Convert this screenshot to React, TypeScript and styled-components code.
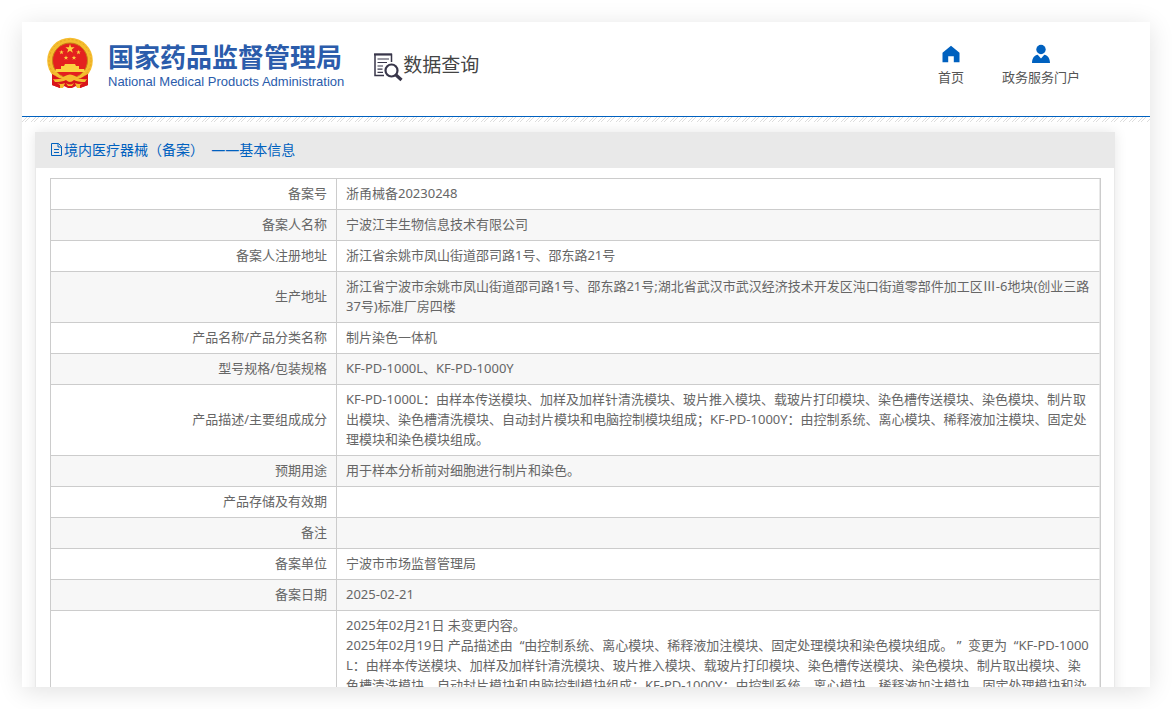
import React from "react";
import styled, { createGlobalStyle } from "styled-components";

const cjk = '"Noto Sans CJK SC", sans-serif';

const GlobalStyle = createGlobalStyle`
  * { box-sizing: border-box; }
  html, body { margin: 0; background: #fff; }
  body {
    font-family: "Noto Sans", ${cjk};
    font-size: 13px;
    line-height: 20px;
    color: #666;
  }
`;

const Page = styled.main`
  margin: 22px;
  height: calc(100vh - 44px);
  overflow: hidden;
  background: #fff;
  box-shadow: 0 4px 24px rgba(0, 0, 0, 0.12);
`;

const Header = styled.header`
  display: flex;
  align-items: flex-start;
  height: 95px;
  padding: 0 70px 0 24px;
  border-bottom: 1px solid #0061bf;
`;

const Brand = styled.a`
  display: flex;
  gap: 14px;
  padding-top: 15px;
  color: #2b5cab;
  text-decoration: none;
`;

const BrandText = styled.span`
  display: flex;
  flex-direction: column;
  padding-top: 2px;
`;

const BrandName = styled.strong`
  font: 700 26px/34px ${cjk};
  white-space: nowrap;
`;

const BrandEnglish = styled.span`
  font: 400 13px/18px "Liberation Sans", sans-serif;
  white-space: nowrap;
`;

const Query = styled.h1`
  display: flex;
  align-items: flex-start;
  margin: 28px 0 0 30px;
  font: 400 19px/28px ${cjk};
  color: #444;
`;

const QueryMark = styled.svg`
  width: 29px;
  height: 29px;
  margin-top: 3px;
`;

const Nav = styled.nav`
  display: flex;
  gap: 38px;
  margin-left: auto;
  padding-top: 22px;
`;

const NavLink = styled.a`
  display: flex;
  flex-direction: column;
  align-items: center;
  gap: 3px;
  color: #555;
  text-decoration: none;
  white-space: nowrap;
`;

const Hatch = styled.svg`
  display: block;
  width: 100%;
  height: 5px;
`;

const Panel = styled.section`
  margin: 10px 35px 0 13px;
  background: #fff;
  border: 1px solid #e9e9e9;
  border-top: 0;
  box-shadow: 0 0 12px rgba(0, 0, 0, 0.1);
`;

const PanelTitle = styled.h2`
  display: flex;
  align-items: center;
  height: 36px;
  margin: 0;
  padding: 0 14px;
  background: #e9e9e9;
  color: #0061bf;
  font-size: 14px;
  font-weight: 400;
`;

const PanelBody = styled.div`
  padding: 10px 13px 20px 14px;
`;

const Table = styled.table`
  width: 100%;
  border-collapse: separate;
  border-spacing: 0;
  border: 1px solid #ccc;
  table-layout: fixed;
`;

const LabelColumn = styled.col`
  width: 286px;
`;

const Row = styled.tr`
  &:nth-child(even) { background: #f7f7f7; }
  & > * { border-bottom: 1px solid #ccc; }
`;

const Label = styled.th`
  padding: 4px 9px 6px;
  border-right: 1px solid #ccc;
  font-weight: 400;
  text-align: right;
`;

const Value = styled.td`
  height: 31px;
  padding: 4px 8px 6px 9px;
  border-right: 1px solid #e9e9e9;
`;

const Record = styled.p`
  margin: 0;
  word-break: break-all;
`;

const Emblem = () => (
  <svg width="48" height="52" viewBox="0 0 48 52" aria-hidden="true">
    <path d="M6 35 L6 48 L14 51 L18 49 L22 51 H26 L30 49 L34 51 L42 48 L42 35 Z" fill="#d9141a" />
    <circle cx="24" cy="23.5" r="22.8" fill="#f5bd2f" />
    <circle cx="24" cy="23.5" r="21" fill="none" stroke="#e8a522" strokeWidth="1" strokeDasharray="2 2" />
    <circle cx="24" cy="23.5" r="17.5" fill="#e4201f" stroke="#c98316" strokeWidth="1" />
    <path d="M24 7 L25.1 10.3 H28.6 L25.8 12.4 L26.9 15.7 L24 13.7 L21.1 15.7 L22.2 12.4 L19.4 10.3 H22.9 Z" fill="#fbd340" />
    <g fill="#fbd340">
      <path id="star" d="M15.5 13 L16.1 14.6 H17.8 L16.4 15.6 L17 17.3 L15.5 16.3 L14 17.3 L14.6 15.6 L13.2 14.6 H14.9 Z" />
      <use href="#star" x="17" />
      <use href="#star" x="4.5" y="5.5" />
      <use href="#star" x="12.5" y="5.5" />
      <path d="M19 27 H29 L30 29 H33 V32 H38 L39 35 H9 L10 32 H15 V29 H18 Z" />
    </g>
    <path d="M6 37 L13 41 H35 L42 37 V48 L34 51 L30 49 H18 L14 51 L6 48 Z" fill="#d9141a" />
    <path d="M7 42 Q14 43 19 39 Q24 36 29 39 Q34 43 41 42 L39 45 Q32 45 28 43 Q24 47 20 43 Q16 45 9 45 Z" fill="#f5bd2f" />
    <path d="M11 46 Q15 48 19 46 L17 51 H14 L14 48 Z M29 46 Q33 48 37 46 L34 48 V51 H31 Z M20 46 Q24 49 28 46 L26 49 H22 Z" fill="#f5bd2f" />
  </svg>
);

const QueryIcon = () => (
  <QueryMark viewBox="0 0 29 29" fill="none" stroke="#38364a" aria-hidden="true">
    <path d="M17.5 9 V1.5 H1 V22.5 H10" strokeWidth="1.5" />
    <path d="M0 1.4 H18" strokeWidth="2" />
    <path d="M3.5 6 H15 M3.5 9.5 H13 M3.5 13 H9 M3.5 16.2 H8.5 M3.5 19.3 H9" strokeWidth="1.2" />
    <circle cx="17.5" cy="17.5" r="6" strokeWidth="2.2" />
    <path d="M22 22 L27.5 27" strokeWidth="3.2" />
  </QueryMark>
);

const HomeIcon = () => (
  <svg width="20" height="20" viewBox="0 0 20 20" fill="#0061bf" aria-hidden="true">
    <path d="M10 1.8 L18.5 8.7 V18.3 H12.8 V12.2 H7.2 V18.3 H1.5 V8.7 Z" />
  </svg>
);

const UserIcon = () => (
  <svg width="20" height="20" viewBox="0 0 20 20" fill="#0061bf" aria-hidden="true">
    <circle cx="10" cy="5.5" r="4.7" />
    <path d="M1 19 C1.2 13.5 3.5 11.5 6.7 10.8 L10 14.4 L13.3 10.8 C16.5 11.5 18.8 13.5 19 19 Z" />
  </svg>
);

const DocumentIcon = () => (
  <svg width="14" height="14" viewBox="0 0 14 14" fill="none" stroke="#0061bf" aria-hidden="true">
    <path d="M1.5 0.5 H8.5 L11.5 3.5 V12.5 H1.5 Z M8 0.5 V4 H11.5 M4 6.5 H9 M4 9.5 H9" />
  </svg>
);

const rows: { label: string; value: string }[] = [
  { label: "备案号", value: "浙甬械备20230248" },
  { label: "备案人名称", value: "宁波江丰生物信息技术有限公司" },
  { label: "备案人注册地址", value: "浙江省余姚市凤山街道邵司路1号、邵东路21号" },
  {
    label: "生产地址",
    value:
      "浙江省宁波市余姚市凤山街道邵司路1号、邵东路21号;湖北省武汉市武汉经济技术开发区沌口街道零部件加工区Ⅲ-6地块(创业三路37号)标准厂房四楼",
  },
  { label: "产品名称/产品分类名称", value: "制片染色一体机" },
  { label: "型号规格/包装规格", value: "KF-PD-1000L、KF-PD-1000Y" },
  {
    label: "产品描述/主要组成成分",
    value:
      "KF-PD-1000L：由样本传送模块、加样及加样针清洗模块、玻片推入模块、载玻片打印模块、染色槽传送模块、染色模块、制片取出模块、染色槽清洗模块、自动封片模块和电脑控制模块组成；KF-PD-1000Y：由控制系统、离心模块、稀释液加注模块、固定处理模块和染色模块组成。",
  },
  { label: "预期用途", value: "用于样本分析前对细胞进行制片和染色。" },
  { label: "产品存储及有效期", value: "" },
  { label: "备注", value: "" },
  { label: "备案单位", value: "宁波市市场监督管理局" },
  { label: "备案日期", value: "2025-02-21" },
];

const changes = [
  "2025年02月21日 未变更内容。",
  "2025年02月19日 产品描述由\u00a0 “由控制系统、离心模块、稀释液加注模块、固定处理模块和染色模块组成。\u00a0”\u00a0 变更为\u00a0 “KF-PD-1000L：由样本传送模块、加样及加样针清洗模块、玻片推入模块、载玻片打印模块、染色槽传送模块、染色模块、制片取出模块、染色槽清洗模块、自动封片模块和电脑控制模块组成；KF-PD-1000Y：由控制系统、离心模块、稀释液加注模块、固定处理模块和染色模块",
];

export default function App() {
  return (
    <>
      <GlobalStyle />
      <Page>
        <Header>
          <Brand href="#">
            <Emblem />
            <BrandText>
              <BrandName>国家药品监督管理局</BrandName>
              <BrandEnglish>National Medical Products Administration</BrandEnglish>
            </BrandText>
          </Brand>
          <Query>
            <QueryIcon />
            数据查询
          </Query>
          <Nav>
            <NavLink href="#">
              <HomeIcon />
              首页
            </NavLink>
            <NavLink href="#">
              <UserIcon />
              政务服务门户
            </NavLink>
          </Nav>
        </Header>
        <Hatch aria-hidden="true">
          <defs>
            <pattern id="hatch" width="9" height="5" patternUnits="userSpaceOnUse">
              <path d="M0 5 L5 0 M3 5 L8 0" stroke="#ddd" strokeWidth="1" />
            </pattern>
          </defs>
          <rect width="100%" height="5" fill="url(#hatch)" />
        </Hatch>
        <Panel>
          <PanelTitle>
            <DocumentIcon />
            境内医疗器械（备案）&nbsp; ——基本信息
          </PanelTitle>
          <PanelBody>
            <Table>
              <colgroup>
                <LabelColumn />
                <col />
              </colgroup>
              <tbody>
                {rows.map((row) => (
                  <Row key={row.label}>
                    <Label scope="row">{row.label}</Label>
                    <Value>{row.value}</Value>
                  </Row>
                ))}
                <Row>
                  <Label scope="row" />
                  <Value>
                    {changes.map((change) => (
                      <Record key={change}>{change}</Record>
                    ))}
                  </Value>
                </Row>
              </tbody>
            </Table>
          </PanelBody>
        </Panel>
      </Page>
    </>
  );
}
